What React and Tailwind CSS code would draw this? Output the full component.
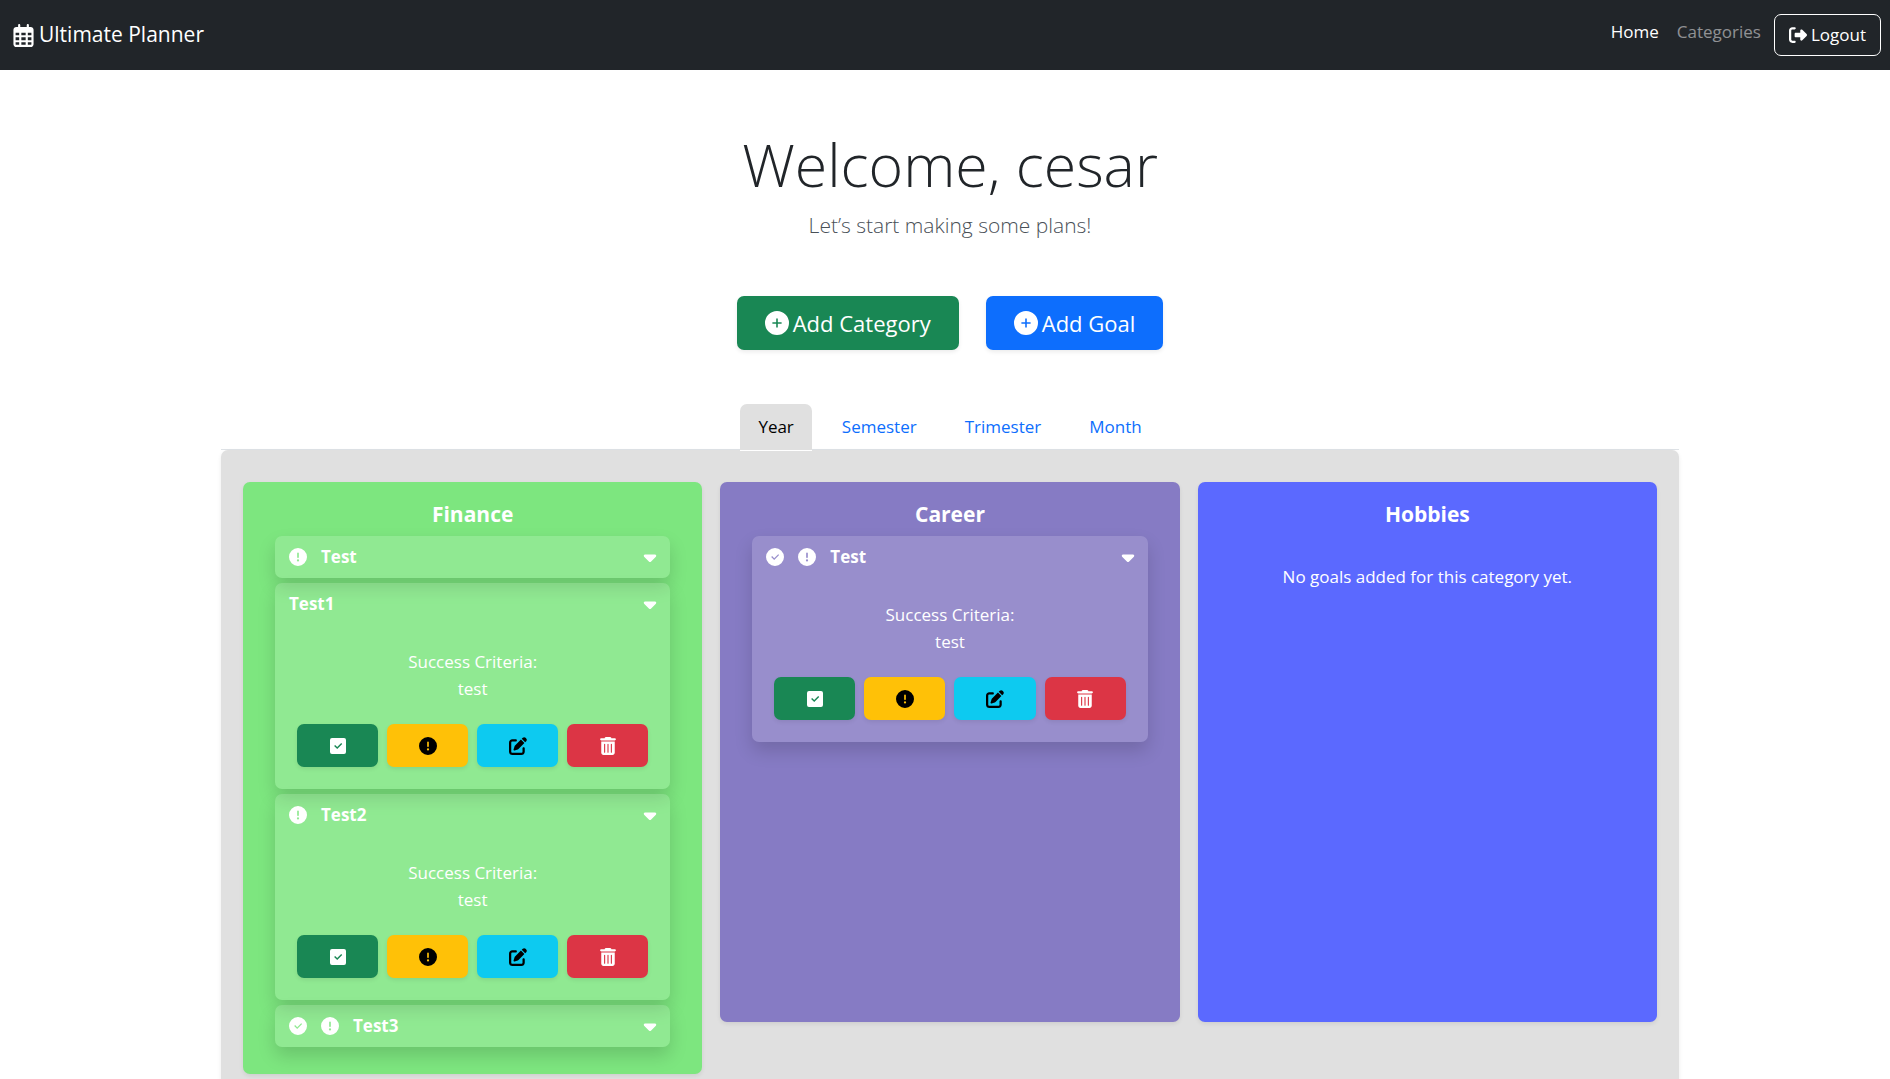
import { useState } from "react";
import {
  FaRegCalendarDays,
  FaRightFromBracket,
  FaCircleExclamation,
  FaPenToSquare,
  FaTrashCan,
  FaCaretDown,
} from "react-icons/fa6";

function CirclePlus({ className }) {
  return (
    <svg viewBox="0 0 24 24" className={className} fill="currentColor" aria-hidden="true">
      <path
        fillRule="evenodd"
        d="M12 0a12 12 0 1 0 0 24a12 12 0 0 0 0-24zM11.2 7.4h1.6v3.8h3.8v1.6h-3.8v3.8h-1.6v-3.8H7.4v-1.6h3.8z"
      />
    </svg>
  );
}

function CircleCheck({ className }) {
  return (
    <svg viewBox="0 0 18 18" className={className} fill="currentColor" aria-hidden="true">
      <path
        fillRule="evenodd"
        d="M9 0a9 9 0 1 0 0 18a9 9 0 0 0 0-18zM12.2 6.2l0.9 0.9l-4.9 4.9l-3-3l0.9-0.9l2.1 2.1z"
      />
    </svg>
  );
}

function SquareCheck({ className }) {
  return (
    <svg viewBox="0 0 18 18" className={className} fill="currentColor" aria-hidden="true">
      <path
        fillRule="evenodd"
        d="M3 1h12a2 2 0 0 1 2 2v12a2 2 0 0 1-2 2H3a2 2 0 0 1-2-2V3a2 2 0 0 1 2-2zM12.2 6.1l1 1l-5 5l-3.1-3.1l1-1l2.1 2.1z"
      />
    </svg>
  );
}

const categories = [
  {
    name: "Finance",
    color: "bg-[#7de67f]",
    goals: [
      { title: "Test", important: true },
      { title: "Test1", criteria: "test", open: true },
      { title: "Test2", criteria: "test", important: true, open: true },
      { title: "Test3", done: true, important: true },
    ],
  },
  {
    name: "Career",
    color: "bg-[#867bc4]",
    goals: [{ title: "Test", criteria: "test", done: true, important: true, open: true }],
  },
  { name: "Hobbies", color: "bg-[#5b69ff]", goals: [] },
];

const actions = [
  { label: "Complete", Icon: SquareCheck, style: "bg-[#198754] text-white" },
  { label: "Mark important", Icon: FaCircleExclamation, style: "bg-[#ffc107] text-black" },
  { label: "Edit", Icon: FaPenToSquare, style: "bg-[#0dcaf0] text-black" },
  { label: "Delete", Icon: FaTrashCan, style: "bg-[#dc3545] text-white" },
];

function Navbar() {
  return (
    <nav className="flex h-[70px] items-center justify-between bg-[#212529] pr-[9px] pl-3 text-white">
      <a href="#" className="flex items-center gap-1 text-[21px]">
        <FaRegCalendarDays className="size-[23px]" />
        Ultimate Planner
      </a>
      <div className="flex items-start text-[17px] leading-6">
        <a href="#" className="px-[9px] pt-1.5">Home</a>
        <a href="#" className="px-[9px] pt-1.5 text-white/50">Categories</a>
        <button className="ml-1 flex h-[42px] items-center gap-1 rounded-[7px] border border-white px-3.5">
          <FaRightFromBracket className="size-[18px]" />
          Logout
        </button>
      </div>
    </nav>
  );
}

function Goal({ goal }) {
  const [open, setOpen] = useState(Boolean(goal.open));
  return (
    <article className="rounded-[7px] bg-white/15 shadow-[0_9px_18px_rgba(0,0,0,0.15)]">
      <button
        onClick={() => setOpen(!open)}
        aria-expanded={open}
        className="flex h-[42px] w-full items-center px-3.5 font-bold"
      >
        {goal.done && <CircleCheck className="mr-3.5 size-[18px]" />}
        {goal.important && <FaCircleExclamation className="mr-3.5 size-[18px]" />}
        <span>{goal.title}</span>
        <FaCaretDown className="-mr-1 ml-auto size-5" />
      </button>
      {open && (
        <div className="px-[22px] pt-[23px] pb-[22px]">
          <p className="text-center leading-[27px]">
            Success Criteria:
            <br />
            {goal.criteria}
          </p>
          <div className="mt-[22px] grid grid-cols-4 gap-[9px]">
            {actions.map(({ label, Icon, style }) => (
              <button
                key={label}
                aria-label={label}
                className={`flex h-[43px] items-center justify-center rounded-[7px] shadow-[0_2px_4px_rgba(0,0,0,0.08)] ${style}`}
              >
                <Icon className="size-[18px]" />
              </button>
            ))}
          </div>
        </div>
      )}
    </article>
  );
}

function Category({ category }) {
  return (
    <section
      className={`min-h-[540px] rounded-[7px] px-8 pt-4 pb-[27px] shadow-[0_2px_4px_rgba(0,0,0,0.08)] ${category.color}`}
    >
      <h2 className="mb-1.5 text-center text-[21px] leading-8 font-bold">{category.name}</h2>
      <div className="flex flex-col gap-[5px]">
        {category.goals.map((goal) => (
          <Goal key={goal.title} goal={goal} />
        ))}
      </div>
      {category.goals.length === 0 && (
        <p className="mt-[27px] text-center leading-[27px]">No goals added for this category yet.</p>
      )}
    </section>
  );
}

function Tabs() {
  const [active, setActive] = useState("Year");
  return (
    <div role="tablist" className="flex justify-center gap-3 border-b border-[#dee2e6]">
      {["Year", "Semester", "Trimester", "Month"].map((tab) => (
        <button
          key={tab}
          role="tab"
          aria-selected={tab === active}
          onClick={() => setActive(tab)}
          className={`relative -mb-0.5 h-[47px] rounded-t-[7px] border-b px-[18px] ${
            tab === active
              ? "border-white bg-[#e0e0e0] text-black"
              : "border-transparent text-[#0d6efd]"
          }`}
        >
          {tab}
        </button>
      ))}
    </div>
  );
}

export default function App() {
  return (
    <div className="h-screen overflow-hidden bg-white font-['Open_Sans','Noto_Sans',sans-serif] text-[17px] text-[#212529]">
      <Navbar />
      <div className="pl-2.5">
        <header className="pt-[54px] text-center">
          <h1 className="text-[59px] leading-[80px] font-light">Welcome, cesar</h1>
          <p className="mt-1 text-[21px] leading-[34px] font-light text-[#495057]">
            Let’s start making some plans!
          </p>
        </header>
        <div className="mt-[54px] flex justify-center gap-[27px] text-[22px] text-white">
          <button className="flex h-[54px] items-center gap-1 rounded-[7px] bg-[#198754] px-7 shadow-[0_2px_4px_rgba(0,0,0,0.08)]">
            <CirclePlus className="size-6" />
            Add Category
          </button>
          <button className="flex h-[54px] items-center gap-1 rounded-[7px] bg-[#0d6efd] px-7 shadow-[0_2px_4px_rgba(0,0,0,0.08)]">
            <CirclePlus className="size-6" />
            Add Goal
          </button>
        </div>
        <main className="mx-auto mt-[54px] max-w-[1458px]">
          <Tabs />
          <div className="grid grid-cols-3 items-start gap-[18px] rounded-[7px] bg-[#e0e0e0] px-[22px] pt-8 pb-8 text-white shadow-[0_2px_4px_rgba(0,0,0,0.08)]">
            {categories.map((category) => (
              <Category key={category.name} category={category} />
            ))}
          </div>
        </main>
      </div>
    </div>
  );
}
